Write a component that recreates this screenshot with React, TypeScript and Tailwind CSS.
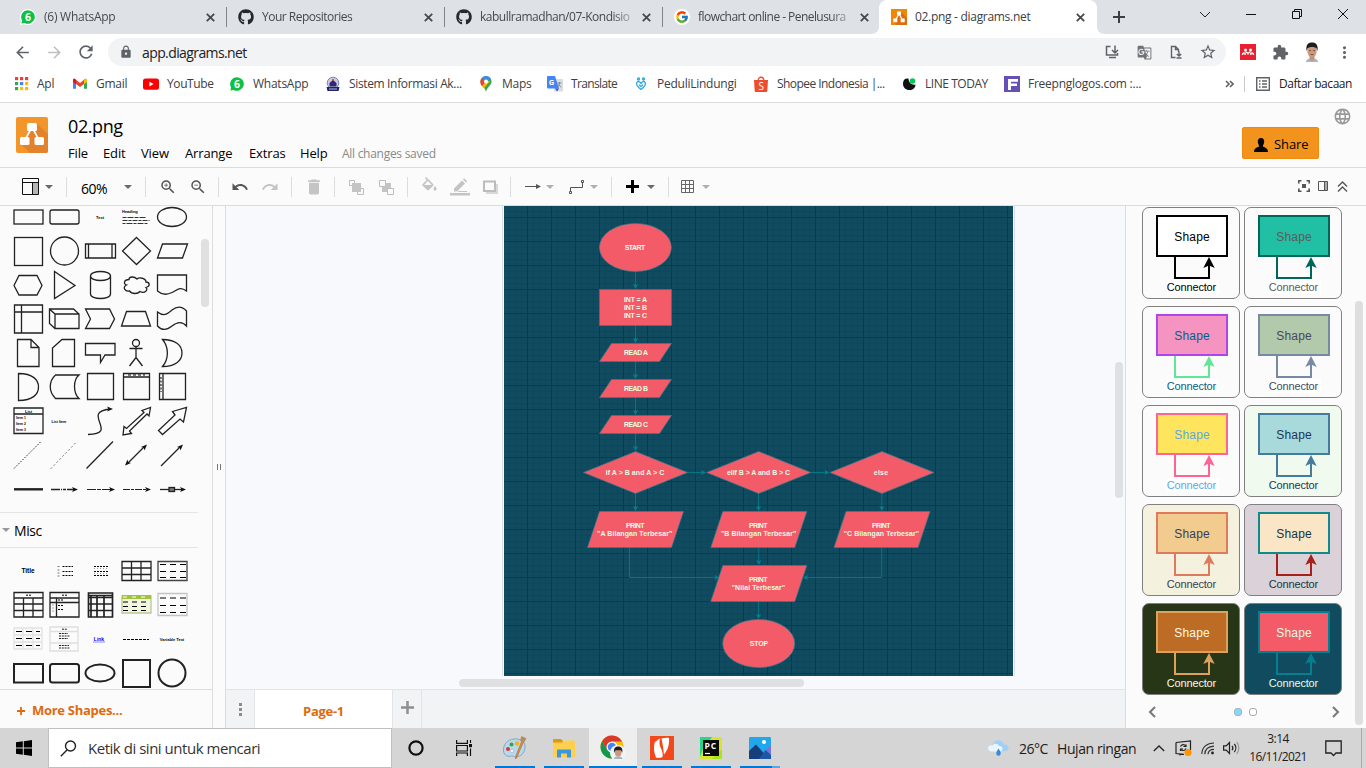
import React from "react";
import { FaGithub } from "react-icons/fa";
import { FcGoogle } from "react-icons/fc";
import {
  MdArrowBack, MdArrowForward, MdRefresh, MdLock, MdStarBorder, MdExtension, MdMoreVert,
  MdZoomIn, MdZoomOut, MdUndo, MdRedo, MdDelete, MdFormatColorFill, MdLanguage, MdGTranslate,
} from "react-icons/md";

type Kids = { children?: React.ReactNode };

/* ---------- small drawings ---------- */

const X = ({ s = 9, c = "#45484c", w = 1.8 }: { s?: number; c?: string; w?: number }) => (
  <svg width={s} height={s} viewBox="0 0 9 9" className="shrink-0" stroke={c} strokeWidth={w}><path d="M.8.8l7.4 7.4M8.2.8L.8 8.2" /></svg>
);

const WaBadge = ({ ring = false }: { ring?: boolean }) => (
  <svg width="16" height="16" viewBox="0 0 16 16">
    {ring && <path d="M8 0a8 8 0 1 1-4 14.9L.2 16 1 12A8 8 0 0 1 8 0z" fill="#fff" />}
    <path d="M8 1.2a6.8 6.8 0 1 1-3.400 12.700L1.400 14.600l.7-3.200A6.800 6.800 0 0 1 8 1.200z" fill="#0cc143" />
    <text x="8" y="12" textAnchor="middle" fontSize="10.500" fontWeight="700" fill="#fff" fontFamily="Open Sans, sans-serif">6</text>
  </svg>
);

const Drawio = ({ size }: { size: number }) => (
  <svg width={size} height={size} viewBox="0 0 16 16">
    <rect width="16" height="16" fill="#f08705" />
    <path d="M10 3l6 6v7H6l-3.500-3.500z" fill="#df6c0c" />
    <path d="M8 5L4.500 11M8 5l3.500 6" stroke="#fff" strokeWidth="1.200" />
    <path d="M6 2.500h4v3.800H6zM2.300 9.500h4v3.800h-4zM9.700 9.500h4v3.800h-4z" fill="#fff" />
  </svg>
);

const Logo = () => (
  <svg width="32" height="36" viewBox="0 0 32 36">
    <rect width="32" height="36" rx="2" fill="#f2962c" />
    <path d="M20 6l12 11v17a2 2 0 0 1-2 2H14L5 27l9-13z" fill="#e2822d" />
    <path d="M15 12L9.500 22M17 12L22.500 22" stroke="#fff" strokeWidth="1.600" />
    <rect x="11" y="6" width="10" height="8" rx="1.500" fill="#fff" />
    <rect x="4" y="20" width="9.500" height="8" rx="1.500" fill="#fff" />
    <rect x="18.500" y="20" width="9.500" height="8" rx="1.500" fill="#fff" />
  </svg>
);

const Apps = () => {
  const c = ["#ea4335", "#ea4335", "#ea4335", "#34a853", "#4285f4", "#fbbc05", "#34a853", "#fbbc05", "#fbbc05"];
  return (
    <svg width="16" height="16" viewBox="0 0 16 16">
      {c.map((f, i) => <rect key={i} x={2 + (i % 3) * 5} y={1 + Math.floor(i / 3) * 5} width="3.200" height="3.200" fill={f} />)}
    </svg>
  );
};
const Gmail = () => (
  <svg width="16" height="16" viewBox="0 0 16 16">
    <path d="M1 3.500v9.200h3V6z" fill="#4285f4" /><path d="M12 6v6.700h3V3.500z" fill="#34a853" />
    <path d="M1 3.500L2.500 2.500 8 7l5.500-4.500L12 8l-4 3-4-3v-1z" fill="#ea4335" />
    <path d="M12 4l2-1.500 1 1V6l-3 2.200z" fill="#fbbc04" /><path d="M4 4L2 2.500 1 3.500V6l3 2.200z" fill="#c5221f" />
  </svg>
);
const Youtube = () => (
  <svg width="16" height="16" viewBox="0 0 16 16"><rect y="2.500" width="16" height="11.200" rx="2.500" fill="#f00" /><path d="M6.400 5.700v4.800l4.200-2.400z" fill="#fff" /></svg>
);
const Campus = () => (
  <svg width="16" height="16" viewBox="0 0 16 16">
    <circle cx="8" cy="7" r="5.800" fill="#c9cbe0" stroke="#7f83b5" /><path d="M4.500 7l3.500-3 3.500 3v3.500h-7z" fill="#2a2a78" />
    <path d="M1.500 11h13l-1 4h-11z" fill="#22226c" /><path d="M4 13h8" stroke="#b9bbd8" /><circle cx="8" cy="4" r="1" fill="#d33" />
  </svg>
);
const MapPin = () => (
  <svg width="16" height="16" viewBox="0 0 16 16">
    <path d="M8 0a5.600 5.600 0 0 1 5.600 5.600C13.600 9.500 9 11 8 16 7 11 2.400 9.500 2.400 5.600A5.600 5.600 0 0 1 8 0z" fill="#34a853" />
    <path d="M8 0a5.600 5.600 0 0 1 4.900 2.900L8 5.600 4 1.700A5.600 5.600 0 0 1 8 0z" fill="#4285f4" />
    <path d="M3.800 1.900L8 5.600 4 10.300C2 8 1.700 4.500 3.800 1.900z" fill="#ea4335" />
    <path d="M8 5.600L4 10.300l1.800 1.900 6.300-7.300z" fill="#fbbc04" /><circle cx="8" cy="5.600" r="2" fill="#fff" />
  </svg>
);
const Translate = () => (
  <svg width="16" height="16" viewBox="0 0 16 16">
    <rect x="7" y="3" width="9" height="12.500" rx="1" fill="#dadce0" /><path d="M0 1a1 1 0 0 1 1-1h7l4 12.500H1a1 1 0 0 1-1-1z" fill="#4285f4" />
    <path d="M8 12.500h4L10 15.500z" fill="#3b50c4" />
    <text x="1.800" y="9.200" fontSize="7.500" fontWeight="700" fill="#fff" fontFamily="Open Sans, sans-serif">G</text>
    <path d="M10.500 7h4M12.500 6v1c0 2-1 3.500-2 4.200M11.500 8.500c.5 1 1.500 2 2.800 2.600" stroke="#5f7f95" strokeWidth=".8" fill="none" />
  </svg>
);
const Peduli = () => (
  <svg width="16" height="16" viewBox="0 0 16 16" fill="none" stroke="#2fa8e0" strokeWidth="1.300">
    <circle cx="5.500" cy="3" r="1" /><circle cx="10.500" cy="3" r="1" />
    <path d="M4 6.200c-1.300 2 .2 4.500 4 7.300 3.800-2.800 5.300-5.300 4-7.300-1-1.200-3-.8-4 1.300-1-2.100-3-2.500-4-1.300zM6 8.700l2 2 2-2" />
  </svg>
);
const Shopee = () => (
  <svg width="16" height="16" viewBox="0 0 16 16">
    <path d="M5 5c0-5 6-5 6 0" fill="none" stroke="#ee4d2d" strokeWidth="1.300" /><path d="M1 4h14l-.7 11a1 1 0 0 1-1 1H2.700a1 1 0 0 1-1-1z" fill="#ee4d2d" />
    <text x="8" y="13.600" textAnchor="middle" fontSize="10" fill="#fff" fontFamily="Open Sans, sans-serif">S</text>
  </svg>
);
const LineToday = () => (
  <svg width="16" height="16" viewBox="0 0 16 16"><path d="M7.500 2.500C4 2 2 4 2 7.500 2 11.500 4.500 14 8.500 14c3.500 0 6-2 6-5.500-3 1-7-1.500-7-6z" fill="#111" /><circle cx="11.500" cy="5" r="2.800" fill="#06c755" /></svg>
);
const FreePng = () => (
  <svg width="16" height="16" viewBox="0 0 16 16"><rect width="16" height="16" fill="#6650b4" /><path d="M4 3h10v2.800H7v1.700h6V10H7v4H4z" fill="#fff" /></svg>
);

const Face = ({ s }: { s: number }) => (
  <svg width={s} height={s} viewBox="0 0 20 20">
    <path d="M4 20c.5-3 2.500-3.500 6-3.500s5.500.5 6 3.500z" fill="#a9b4bd" /><path d="M7.500 13h5v4L10 19l-2.500-2z" fill="#c58f72" />
    <ellipse cx="10" cy="9" rx="4.700" ry="6.500" fill="#c99a80" />
    <path d="M4.600 9C3.500 3 6 .5 10 .5S16.500 3 15.400 9L14.300 6C12 4.500 8 4.500 5.700 6z" fill="#221d1c" />
    <path d="M7 8.500h2M11 8.500h2M8.500 12.500h3" stroke="#6d4234" strokeWidth=".8" />
  </svg>
);

const Caret = ({ c = "#6a6a6a" }: { c?: string }) => (
  <svg width="8" height="4" viewBox="0 0 8 4" className="shrink-0"><path d="M0 0h8L4 4z" fill={c} /></svg>
);

/* ---------- browser chrome ---------- */

const tabs = [
  { icon: <WaBadge ring />, label: "(6) WhatsApp", track: "tracking-[-0.25px]" },
  { icon: <FaGithub size={16} color="#24292f" />, label: "Your Repositories", track: "tracking-[-0.5px]" },
  { icon: <FaGithub size={16} color="#24292f" />, label: "kabullramadhan/07-Kondisio", track: "tracking-[-0.48px]" },
  { icon: <span className="rounded-full bg-white p-px"><FcGoogle size={14} /></span>, label: "flowchart online - Penelusura", track: "tracking-[-0.55px]" },
];

function TabStrip() {
  return (
    <div className="flex h-[34px] bg-[#dee1e6] pl-[9px] text-[12px] text-[#45494d]">
      {tabs.map((t, i) => (
        <div key={i} className={`flex w-[218px] shrink-0 items-center pl-[11px] ${i < 3 ? "" : "pr-px"}`}>
          <span className="flex w-4 shrink-0 justify-center">{t.icon}</span>
          <span className={`ml-2 w-[162px] shrink-0 whitespace-nowrap [mask-image:linear-gradient(to_right,#000_132px,transparent_160px)] ${t.track}`}>{t.label}</span>
          <X />
          {i < 3 && <span className="ml-auto h-5 w-px bg-[#808489]" />}
        </div>
      ))}
      <div className="-ml-[10px] flex w-[234px] shrink-0 text-[#3c4043]">
        <svg width="8" height="34" className="shrink-0"><path d="M8 34H0c5 0 8-3 8-8z" fill="#fff" /></svg>
        <div className="flex grow items-center rounded-t-lg bg-white pl-[12px]">
          <Drawio size={16} />
          <span className="ml-2 w-[161px] tracking-[-0.3px]">02.png - diagrams.net</span>
          <X />
        </div>
        <svg width="8" height="34" className="shrink-0"><path d="M0 34h8c-5 0-8-3-8-8z" fill="#fff" /></svg>
      </div>
      <div className="flex w-[28px] items-center justify-center"><svg width="12" height="12" stroke="#3c4043" strokeWidth="2"><path d="M6 0v12M0 6h12" /></svg></div>
      <div className="ml-auto flex h-[28px] items-center gap-[30px] pr-[15px]">
        <svg width="16" height="16" fill="none" stroke="#222"><path d="M3 6l5 5 5-5" /></svg>
        <svg width="16" height="16" stroke="#111"><path d="M3 8.500h10" /></svg>
        <svg width="16" height="16" fill="none" stroke="#111"><path d="M3.500 5.500h7v7h-7zM5.500 5V3.500h7v7H11" /></svg>
        <svg width="16" height="16" stroke="#111"><path d="M3 3l10 10M13 3L3 13" /></svg>
      </div>
    </div>
  );
}

const C32 = ({ children }: Kids) => <span className="flex w-8 justify-center">{children}</span>;

function AddressBar() {
  return (
    <div className="flex h-[36px] items-center bg-white pl-[6px]">
      <C32><MdArrowBack size={19} color="#5f6368" /></C32>
      <C32><MdArrowForward size={19} color="#bdbfc2" /></C32>
      <C32><MdRefresh size={20} color="#5f6368" /></C32>
      <div className="ml-[6px] flex h-7 w-[1118px] items-center rounded-full bg-[#f1f3f4] pr-[2px]">
        <span className="ml-[11px]"><MdLock size={14} color="#5f6368" /></span>
        <span className="ml-[9px] text-[14px] tracking-[-0.6px] text-[#202124]">app.diagrams.net</span>
        <div className="ml-auto flex items-center">
          <C32><svg width="16" height="16" fill="none" stroke="#5f6368" strokeWidth="1.500"><path d="M6.500 2.500H2.500v8.500h11V9M11 1.500v7M8 6l3 3 3-3M5 13.500h7" /></svg></C32>
          <C32><MdGTranslate size={15} color="#6f7377" /></C32>
          <C32><svg width="16" height="16" fill="none" stroke="#5f6368" strokeWidth="1.400"><path d="M7.500 13.500H3.500v-11h4l3 3V8M7.500 2.500v3h3M11 7.500v4M8.800 10l2.200 2 2.200-2M8.500 14h5" /></svg></C32>
          <C32><MdStarBorder size={18} color="#5f6368" /></C32>
        </div>
      </div>
      <div className="ml-[6px] flex items-center">
        <C32>
          <svg width="16" height="16" viewBox="0 0 16 16"><rect width="16" height="16" fill="#e8202f" /><path d="M2.500 11C2.500 8.500 5 8 5.300 10.800M5.500 8C6.500 8 7 9 8 9s1.500-1 2.500-1M13.500 11c0-2.500-2.500-3-2.800-.2M8 8.500v2" fill="none" stroke="#fff" strokeWidth="1.500" /><circle cx="5.500" cy="6" r="1.500" fill="#fff" /><circle cx="10.500" cy="6" r="1.500" fill="#fff" /></svg>
        </C32>
        <C32><MdExtension size={17} color="#5f6368" /></C32>
        <C32><Face s={20} /></C32>
        <C32><MdMoreVert size={19} color="#5f6368" /></C32>
      </div>
    </div>
  );
}

const marks = [
  { w: "w-[59px]", icon: <Apps />, t: "Apl", k: "" },
  { w: "w-[71px]", icon: <Gmail />, t: "Gmail", k: "" },
  { w: "w-[86px]", icon: <Youtube />, t: "YouTube", k: "tracking-[-0.4px]" },
  { w: "w-[96px]", icon: <WaBadge />, t: "WhatsApp", k: "" },
  { w: "w-[153px]", icon: <Campus />, t: "Sistem Informasi Ak...", k: "tracking-[-0.35px]" },
  { w: "w-[69px]", icon: <MapPin />, t: "Maps", k: "" },
  { w: "w-[86px]", icon: <Translate />, t: "Translate", k: "tracking-[-0.65px]" },
  { w: "w-[120px]", icon: <Peduli />, t: "PeduliLindungi", k: "" },
  { w: "w-[148px]", icon: <Shopee />, t: "Shopee Indonesia |...", k: "tracking-[-0.55px]" },
  { w: "w-[103px]", icon: <LineToday />, t: "LINE TODAY", k: "tracking-[-0.45px]" },
  { w: "w-[150px]", icon: <FreePng />, t: "Freepnglogos.com :...", k: "" },
];

function Bookmarks() {
  return (
    <div className="flex h-[33px] items-center border-b border-[#dadce0] bg-white pb-[4px] pl-[13px] text-[12px] tracking-[-0.25px] text-[#3c4043]">
      {marks.map((m) => (
        <div key={m.t} className={`flex shrink-0 items-center gap-2 whitespace-nowrap ${m.w}`}>{m.icon}<span className={m.k}>{m.t}</span></div>
      ))}
      <svg width="9" height="8" className="ml-[71px] shrink-0" fill="none" stroke="#5f6368" strokeWidth="1.600"><path d="M1 1l3 3-3 3M5 1l3 3-3 3" /></svg>
      <span className="ml-[10px] h-4 w-px bg-[#c6c9cd]" />
      <svg width="14" height="14" className="ml-[11px] shrink-0" fill="none" stroke="#5f6368" strokeWidth="1.400"><path d="M.7.7h12.600v12.600H.7zM3 4h1.500M6 4h5M3 7h1.500M6 7h5M3 10h1.500M6 10h5" /></svg>
      <span className="ml-[9px] whitespace-nowrap tracking-[-0.45px] text-[#202124]">Daftar bacaan</span>
    </div>
  );
}

/* ---------- application header and toolbar ---------- */

const menus = [
  { t: "File", w: "w-[35px]" }, { t: "Edit", w: "w-[38px]" }, { t: "View", w: "w-[44px]" },
  { t: "Arrange", w: "w-[64px]" }, { t: "Extras", w: "w-[51px]" }, { t: "Help", w: "w-[42px]" },
];

function Header() {
  return (
    <div className="flex h-[65px] border-b border-[#dadce0] bg-[#fbfbfb]">
      <div className="ml-4 mt-[14px]"><Logo /></div>
      <div className="ml-5 flex flex-col">
        <div className="mt-[11px] h-6 text-[18px] leading-6 tracking-[-0.4px]">02.png</div>
        <div className="mt-[6px] flex h-5 items-center text-[13px] tracking-[-0.15px]">
          {menus.map((m) => <span key={m.t} className={m.w}>{m.t}</span>)}
          <span className="whitespace-nowrap text-[12px] tracking-[-0.28px] text-[#8a8a8a]">All changes saved</span>
        </div>
      </div>
      <div className="ml-auto mt-6 flex h-8 w-[77px] items-center rounded-[2px] border border-[#ef8a0b] bg-[#f2931e] pl-[11px] pt-[3px] text-[13px] text-black">
        <svg width="14" height="14" viewBox="0 0 14 14"><path d="M7 0c2.300 0 3.500 1.700 3.200 4C10 6 9 7 8.800 8.300c.5.900 5.200 1.200 5.200 5.700H0c0-4.500 4.700-4.800 5.200-5.700C5 7 4 6 3.800 4 3.500 1.700 4.700 0 7 0z" /></svg>
        <span className="ml-[6px] tracking-[-0.1px]">Share</span>
      </div>
      <div className="ml-[15px] mr-[15px] mt-[5px]"><MdLanguage size={19} className="-m-px" color="#989898" /></div>
    </div>
  );
}

const Sep = ({ m }: { m: string }) => <span className={`h-5 w-px shrink-0 bg-[#dadce0] ${m}`} />;

function Toolbar() {
  return (
    <div className="flex h-[38px] items-center border-b border-[#dadce0] bg-[#fbfbfb] [&>svg]:shrink-0">
      <svg width="17" height="17" className="ml-[22px]"><rect x="11" y="5" width="5" height="11" fill="#b5b5b5" /><path d="M.5.5h16v16H.5zM.5 4.500h16M10.500 4.500v12" fill="none" stroke="#111" /></svg>
      <span className="ml-[6px] flex"><Caret /></span>
      <Sep m="ml-[13px]" />
      <span className="ml-[14px] mt-1 w-[28px] text-[14px] tracking-[-0.5px]">60%</span>
      <span className="ml-[15px] flex"><Caret /></span>
      <Sep m="ml-[13px]" />
      <MdZoomIn size={18} color="#555" className="ml-[13px]" />
      <MdZoomOut size={18} color="#555" className="ml-[12px]" />
      <Sep m="ml-[11px]" />
      <MdUndo size={18} color="#555" className="ml-[12px]" />
      <MdRedo size={18} color="#c4c4c4" className="ml-[12px]" />
      <Sep m="ml-[12px]" />
      <MdDelete size={20} color="#c4c4c4" className="-mr-px ml-[12px]" />
      <Sep m="ml-[11px]" />
      <svg width="18" height="18" className="ml-[12px]"><path d="M2.500 2.500h5v5h-5zM10.500 10.500h6v6h-6z" fill="#fbfbfb" stroke="#bdbdbd" /><rect x="5" y="5" width="9" height="9" fill="#c4c4c4" /></svg>
      <svg width="18" height="18" className="ml-[12px]"><path d="M5 5h9v9H5z" fill="#c4c4c4" /><path d="M2.500 2.500h6v6h-6zM10.500 10.500h6v6h-6z" fill="#fbfbfb" stroke="#bdbdbd" /></svg>
      <Sep m="ml-[12px]" />
      <MdFormatColorFill size={19} color="#c4c4c4" className="ml-[12px] mr-[-1px] [clip-path:inset(0_0_22%_0)]" />
      <svg width="20" height="20" className="ml-[12px]"><path d="M4 11.500L12 3.500l3 3-8 8H4zM13 2.500l1.200-1.200 3 3L16 5.500z" fill="#c4c4c4" /><path d="M8 14.500h9" stroke="#c4c4c4" /><path d="M0 16h20v2.500H0z" fill="#c4c4c4" /></svg>
      <svg width="18" height="18" className="ml-[11px]"><path d="M5 6h12v10H5z" fill="#d8d8d8" /><rect x="3" y="3.500" width="11" height="9.500" fill="#fbfbfb" stroke="#bcbcbc" strokeWidth="2" /></svg>
      <Sep m="ml-[11px]" />
      <svg width="16" height="8" className="ml-[14px]"><path d="M0 3.500h13" stroke="#555" /><path d="M11 1L16 3.500l-5 2.500z" fill="#555" /></svg>
      <span className="ml-[5px] flex"><Caret c="#b0b0b0" /></span>
      <svg width="16" height="16" className="ml-[15px]" fill="none" stroke="#555"><path d="M1.500 12V8.500h12V4M.5 12.500h2v2h-2zM12.500 1.500h2v2h-2z" /></svg>
      <span className="ml-[5px] flex"><Caret c="#b0b0b0" /></span>
      <Sep m="ml-[13px]" />
      <svg width="13" height="13" className="ml-[14px]"><path d="M6.500 0v13M0 6.500h13" stroke="#000" strokeWidth="3" /></svg>
      <span className="ml-[8px] flex"><Caret /></span>
      <Sep m="ml-[13px]" />
      <svg width="13" height="13" className="ml-[12px]" fill="none" stroke="#666"><path d="M.5.5h12v12H.5zM4.500 0v13M8.500 0v13M0 4.500h13M0 8.500h13" /></svg>
      <span className="ml-[8px] flex"><Caret c="#b0b0b0" /></span>
      <div className="ml-auto flex items-center gap-[8px] pr-[18px] [&>svg]:-mt-px">
        <svg width="12" height="12" fill="none" stroke="#555" strokeWidth="1.600"><path d="M.8 3.500V.8h2.700M8.500.8h2.700v2.700M11.200 8.500v2.700H8.500M3.500 11.200H.8V8.500" /><rect x="4" y="4" width="4" height="4" fill="#555" stroke="none" /></svg>
        <svg width="10" height="10"><rect x="6" y="1" width="3" height="8" fill="#aaa" /><path d="M.5.5h9v9h-9zM6.500 0v10" fill="none" stroke="#555" /></svg>
        <svg width="11" height="11" fill="none" stroke="#555" strokeWidth="1.400" className="ml-[1px]"><path d="M1 5.500L5.500 1 10 5.500M1 10.500L5.500 6 10 10.500" /></svg>
      </div>
    </div>
  );
}

/* ---------- shape palette ---------- */

const Tiny = ({ x = 0, y = 0, s = 4, b = true, c = "#000", a = "middle", children }: Kids & { x?: number; y?: number; s?: number; b?: boolean; c?: string; a?: "start" | "middle" }) => (
  <text x={x} y={y} fontSize={s} textAnchor={a} fontWeight={b ? 700 : 400} fill={c} stroke="none" fontFamily="Liberation Sans, sans-serif">{children}</text>
);
const Head = ({ x, y, r }: { x: number; y: number; r: number }) => (
  <path d="M0 0L-6 -2.500L-4.500 0L-6 2.500Z" fill="#111" stroke="none" transform={`translate(${x} ${y}) rotate(${r})`} />
);
const rule = (d: string, c = "#111", dash = "") => <path d={d} stroke={c} strokeWidth="1" strokeDasharray={dash} />;

const general: React.ReactNode[] = [
  <rect x="-14" y="-7" width="29" height="14" />,
  <rect x="-14" y="-7" width="29" height="14" rx="2" />,
  <Tiny y={1.500}>Text</Tiny>,
  <><Tiny x={-14} y={-4} a="start">Heading</Tiny>{rule("M-13.500 .5h24", "#333", "4 1 6 1")}{rule("M-13.500 3.500h27", "#333", "5 1 3 1")}{rule("M-13.500 6.500h25", "#333", "3 1 6 1")}</>,
  <ellipse rx="14.500" ry="9.500" />,
  <rect x="-13.500" y="-13.500" width="28" height="28" />,
  <circle cx=".5" r="14" />,
  <path d="M-14.500-7h30v14h-30zM-11.500-7v14M12-7v14" />,
  <path d="M.5-13.500l14 13.500-14 13.500L-13.500 0z" />,
  <path d="M-9.500-7h25L10.500 7h-25z" />,
  <path d="M-14 .5l5-10h18l5 10-5 9.500H-9z" />,
  <path d="M-9.500-13.500v27L11 .5z" />,
  <path d="M-9.500-9v18c0 6 20 6 20 0V-9c0-6-20-6-20 0c0 6 20 6 20 0" />,
  <path d="M-7-5.500C-12-5.500-13-1-9.500 0-14 2-11 7-6.500 6-4 9.500 2 9 4 6.500 9 9 12.500 4.500 10 2.500 15 1 13.500-3 10-3 10-7 3-8 1-6-2-9-7-8.500-7-5.500z" />,
  <path d="M-14.500-10h29V6C8 1 5 5 0 7.500S-10 10-14.500 6z" />,
  <path d="M-13.500-14h28v28h-28zM-13.500-7h28M-6.500-14v28" />,
  <path d="M-14.500-10h24l5.500 5v14.500h-24l-5.500-5zM-14.500-10l5.500 5h24M-9-5v14.500" />,
  <path d="M-14.500-10h24l5 10-5 9.500h-24l5-9.500z" />,
  <path d="M-9.500-7.500h19L14.500 7h-29z" />,
  <path d="M-14.500-7C-8-2-5-5 0-9S10-13 14.500-8V7C10 2 5 3 0 7S-10 12-14.500 7z" />,
  <path d="M-10.500-13.500H3l8 8v19h-21.500zM3-13.500v8h8" />,
  <path d="M-2-13.500h12.500v27h-22V-5z" />,
  <path d="M-14.500-9.500h29.500V2H5L.5 9.500V2h-15z" />,
  <><circle cy="-10" r="3.500" /><path d="M0-6.500V5M-6.500-4.500h13M0 4.500L-6.500 13M0 4.500L6.500 13" /></>,
  <path d="M-9.500-13.500C3-13.500 10-8 10 0S3 13.500-9.500 13.500C-3 6-3-6-9.500-13.500z" />,
  <path d="M-9.500-13.500C5-13.500 10.500-7 10.500 0S5 13.500-9.500 13.500z" />,
  <path d="M-8.500-12h23.500c-6 5-6 18 0 23.500h-23.500c-7-7-7-17 0-23.500z" />,
  <path d="M-12.500-13.500h26v26h-26z" />,
  <><path d="M-12.500-13.500h26v26h-26zM-12.500-10h26" />{rule("M-8-12h17", "#000", "3 2")}</>,
  <><path d="M-12.500-13.500h26v26h-26zM-9-13.500v26" />{rule("M-11-10v15", "#000", "2 1.500")}</>,
  <><path d="M-14-13h29v25.500h-29zM-14-7h29" /><Tiny x={.5} y={-8.500}>List</Tiny><Tiny x={-12} y={-2.500} s={3.400} a="start">Item 1</Tiny><Tiny x={-12} y={3.500} s={3.400} a="start">Item 2</Tiny><Tiny x={-12} y={9.500} s={3.400} a="start">Item 3</Tiny></>,
  <Tiny x={-12.500} y={1.500} s={3.600} a="start">List Item</Tiny>,
  <><path d="M-12 13.500C20 13-20-9 10-12" /><Head x={13} y={-12} r={0} /></>,
  <path d="M-13 14l1-8.500 2.500 2L8-8.500l-2-2 8.500-3-1.500 8.500-2-2L-6.500 10l2 2.500z" />,
  <path d="M-13.500 9.500L3-6 .5-9.500 14.500-13.500 11.500 1 8-2-9.500 13.500z" />,
  <path d="M-14 13.500L13-13.500" strokeWidth="1" strokeDasharray="1.500 1.500" />,
  <path d="M-13 13.500L13-13.500" strokeWidth="1" strokeDasharray="1.200 3" />,
  <path d="M-13.500 13.500L13-13.500" />,
  <><path d="M-9 9L8-8" /><Head x={-11} y={10.500} r={135} /><Head x={11} y={-10.500} r={-45} /></>,
  <><path d="M-11 11L8-8" /><Head x={11} y={-10.500} r={-45} /></>,
  <path d="M-14 .3h29" strokeWidth="2.400" />,
  <><path d="M-13 .5h24" strokeDasharray="9 1 1 1 3 1" /><Head x={14} y={.5} r={0} /></>,
  <><path d="M-13 .5h25" strokeWidth="1" strokeDasharray="9 1 4 1" /><Head x={15} y={.5} r={0} /></>,
  <><path d="M-13 .5h25" strokeWidth="1" strokeDasharray="7 1 3 1" /><Head x={15} y={.5} r={0} /></>,
  <><path d="M-12 .5h24" /><rect x="-3" y="-1.500" width="5.500" height="4" fill="#777" /><Head x={14} y={.5} r={0} /></>,
];

const dashRows = (c = "#000") => rule("M-12-6.500h26M-12 .5h26M-12 6.500h26", c, "6 4");
const misc: React.ReactNode[] = [
  <Tiny s={6.500} y={2.200}>Title</Tiny>,
  <>{rule("M-6.500-4.500h2M-6.500-1h2M-6.500 2h2M-6.500 5h2", "#777")}{rule("M-1.500-4.500H9M-1.500 .5H9M-1.500 4.500H9", "#000", "2 1")}</>,
  <>{rule("M-6-4.500h15M-6 .5h15M-6 4.500h15", "#000", "2 1")}{rule("M-6-2.500h14M-6 2.500h14", "#999", "1 2")}</>,
  <path d="M-14-9.500h29v19h-29zM-14-3h29M-14 3.500h29M-4.500-9.500v19M5-9.500v19" />,
  <><path d="M-14-9.500h29v19h-29z" stroke="#444" />{dashRows()}</>,
  <><path d="M-14-12.500h29v24.500h-29zM-14-7h29M-14-1h29M-14 5.500h29M-4.500-7v19M5-7v19" />{rule("M-2-9.800h6", "#000", "2 1")}</>,
  <><path d="M-14-12.500h29v24.500h-29zM-14-7h29M-14-2.500h29M-7.500-7v19" />{rule("M-2-9.800h6M-6-5h6M-6 .5h6M-6 4.500h6", "#000", "2 1")}{rule("M-11-.5v9", "#555", "1 2")}</>,
  <path d="M-11.500-12h24v24h-24zM-11.500-9.500h24M-11.500-7.500h24M-11.500-1h24M-11.500 5.500h24M-9-9v21M-3-9v21M4-9v21" strokeWidth="1.700" />,
  <><path d="M-14-9h29v17h-29z" fill="#f3f6df" stroke="#b9c79a" /><path d="M-14-8h29" stroke="#a2c13c" strokeWidth="4" />{rule("M-13-8h26", "#fff", "4 5")}{rule("M-13-3h26M-13 1.500h26M-13 5.500h26", "#000", "5 4")}</>,
  <><path d="M-14-11.500h29v22h-29z" stroke="#c4c4c4" />{rule("M-12-7h26M-12 .5h26M-12 7.500h26", "#000", "6 4")}</>,
  <><path d="M-14-11h28v21h-28zM-14-4h28M-14 3h28M-5-11v21M5-11v21" stroke="#e2e2e2" />{rule("M-12-7.500h24M-12-.5h24M-12 6.500h24", "#000", "6 4")}</>,
  <><path d="M-14-12h28v24h-28zM-14-7.500h28M-14 4h28" stroke="#dedede" />{rule("M-2-9.800h5M-5-5.500H4M-5-3H6M-5-.5H4M-5 6.500H5M-5 9H6", "#222", "2 .8")}</>,
  <><Tiny s={5} x={-1} y={1.500} c="#0000ee">Link</Tiny>{rule("M-7 3H5", "#8a8aff")}</>,
  rule("M-13 .5h26", "#000", "3 1"),
  <Tiny s={4} y={1.500}>Variable Text</Tiny>,
  <rect x="-14" y="-9" width="29" height="18.500" strokeWidth="2" />,
  <rect x="-14" y="-9" width="29" height="18.500" rx="2.500" strokeWidth="2" />,
  <ellipse rx="14.500" ry="8.500" strokeWidth="2" />,
  <rect x="-13" y="-13" width="27" height="27" strokeWidth="2" />,
  <circle r="13.500" strokeWidth="2" />,
];

const Palette = ({ items }: { items: React.ReactNode[] }) => (
  <div className="grid w-[180px] grid-cols-5">
    {items.map((it, i) => (
      <svg key={i} width="36" height="34" viewBox="-18 -17 36 34" fill="none" stroke="#222" strokeWidth="1.300">{it}</svg>
    ))}
  </div>
);

function Sidebar() {
  return (
    <div className="flex w-[213px] shrink-0 flex-col border-r border-[#dadce0] bg-[#fbfbfb]">
      <div className="flex h-[484px] overflow-hidden border-b border-[#dadce0]">
        <div className="-mt-[6px] w-[198px] shrink-0">
          <div className="h-[312px] pl-[10px]"><Palette items={general} /></div>
          <div className="flex h-[36px] items-center border-y border-[#e5e5e5] pl-[2px] text-[14px]"><Caret c="#999" /><span className="ml-1 tracking-[-0.4px]">Misc</span></div>
          <div className="pl-[10px] pt-[6px]"><Palette items={misc} /></div>
        </div>
        <div className="ml-[3px] mt-[33px] h-[68px] w-2 rounded-full bg-[#e0e0e0]" />
      </div>
      <div className="flex h-[38px] items-center pl-[17px] pt-[3px] text-[13px] font-bold tracking-[-0.28px] text-[#dd6b0e]">
        <svg width="8" height="8" stroke="#dd6b0e" strokeWidth="1.800"><path d="M4 0v8M0 4h8" /></svg>
        <span className="ml-[7px]">More Shapes...</span>
      </div>
    </div>
  );
}

/* ---------- flowchart ---------- */

const FILL = "#f45b69", EDGE = "#028090";
const Lbl = ({ x, y, w, children }: Kids & { x: number; y: number; w: number }) => (
  <text x={x} y={y} textLength={w} fontSize="7" fontWeight="700" fill="#e4fde1" fontFamily="Liberation Sans, sans-serif">{children}</text>
);
const Arrow = ({ x, y, r = 0 }: { x: number; y: number; r?: number }) => (
  <path d="M0 0L-2.600-5L0-4L2.600-5Z" fill={EDGE} transform={`translate(${x} ${y}) rotate(${r})`} />
);
const Down = ({ x, a, b }: { x: number; a: number; b: number }) => <><path d={`M${x} ${a}V${b - 4}`} stroke={EDGE} strokeWidth=".8" /><Arrow x={x} y={b} /></>;
const Para = ({ x, y, w, h }: { x: number; y: number; w: number; h: number }) => <path d={`M${x + 12} ${y}H${x + w}L${x + w - 12} ${y + h}H${x}Z`} />;
const Diamond = ({ x }: { x: number }) => <path d={`M${x} 451.500l52 21-52 21-52-21z`} />;

function Flowchart() {
  return (
    <svg width="509" height="470" viewBox="504 206 509 470" className="block">
      <defs>
        <pattern id="minor" x="503" y="199" width="6" height="6" patternUnits="userSpaceOnUse"><path d="M0 .5h6M.5 0v6" stroke="#0e4359" strokeWidth="1" /></pattern>
        <pattern id="major" x="503" y="193" width="24" height="24" patternUnits="userSpaceOnUse"><path d="M0 .5h24M.5 0v24" stroke="#0a3a50" strokeWidth="1" /></pattern>
      </defs>
      <rect x="504" y="206" width="509" height="470" fill="#114b5f" />
      <rect x="504" y="206" width="509" height="470" fill="url(#minor)" opacity=".65" />
      <rect x="504" y="206" width="509" height="470" fill="url(#major)" />
      <g fill="none">
        <Down x={635.500} a={271} b={289} /><Down x={635.500} a={325} b={343} /><Down x={635.500} a={361} b={379} />
        <Down x={635.500} a={397} b={415} /><Down x={635.500} a={433} b={451} />
        {[635.500, 758.500, 881.800].map((x) => <Down key={x} x={x} a={493} b={511} />)}
        <Down x={758.800} a={547} b={565} /><Down x={758.500} a={601} b={619} />
        <path d="M687 472.500H702M811 472.500H826M629.500 547V577.500H716M881.700 547V577.500H807" stroke={EDGE} strokeWidth=".8" />
        <Arrow x={706} y={472.500} r={-90} /><Arrow x={829.500} y={472.500} r={-90} /><Arrow x={719.500} y={577.500} r={-90} /><Arrow x={803} y={577.500} r={90} />
      </g>
      <g fill={FILL} stroke="#3b7d8c" strokeWidth=".7">
        <ellipse cx="635.400" cy="247.500" rx="36" ry="24" />
        <rect x="599.500" y="289.500" width="72" height="36" />
        {[343.500, 379.500, 415.500].map((y) => <Para key={y} x={599.500} y={y} w={72} h={18} />)}
        <Diamond x={635.500} /><Diamond x={758.700} /><Diamond x={882} />
        {[587.500, 710.800, 834].map((x) => <Para key={x} x={x} y={511.500} w={96} h={36} />)}
        <Para x={710.800} y={565.500} w={96} h={36} />
        <ellipse cx="758.700" cy="643.500" rx="36" ry="24" />
      </g>
      <Lbl x={624.700} y={250} w={20.500}>START</Lbl>
      <Lbl x={624} y={302} w={23}>INT = A</Lbl><Lbl x={624} y={310} w={23}>INT = B</Lbl><Lbl x={624} y={318} w={23}>INT = C</Lbl>
      <Lbl x={624} y={355} w={24}>READ A</Lbl><Lbl x={624} y={391} w={24}>READ B</Lbl><Lbl x={624} y={427} w={24}>READ C</Lbl>
      <Lbl x={605.700} y={475} w={58.500}>if A &gt; B and A &gt; C</Lbl>
      <Lbl x={727} y={475} w={63}>elif B &gt; A and B &gt; C</Lbl>
      <Lbl x={873.700} y={475} w={14.500}>else</Lbl>
      <Lbl x={626} y={528} w={18.500}>PRINT</Lbl><Lbl x={597} y={536} w={75.300}>"A Bilangan Terbesar"</Lbl>
      <Lbl x={749} y={528} w={18.500}>PRINT</Lbl><Lbl x={721} y={536} w={75.300}>"B Bilangan Terbesar"</Lbl>
      <Lbl x={872} y={528} w={18.500}>PRINT</Lbl><Lbl x={843.700} y={536} w={75.300}>"C Bilangan Terbesar"</Lbl>
      <Lbl x={749} y={582} w={18.500}>PRINT</Lbl><Lbl x={731.700} y={590} w={53.500}>"Nilai Terbesar"</Lbl>
      <Lbl x={749.700} y={646} w={18.500}>STOP</Lbl>
    </svg>
  );
}

function Canvas() {
  return (
    <div className="flex w-[899px] shrink-0 flex-col bg-[#f8f9fc]">
      <div className="flex h-[470px]">
        <div className="ml-[276px] w-px bg-[#dcdfe3]" />
        <div className="ml-px"><Flowchart /></div>
        <div className="ml-px w-px bg-[#dcdfe3]" />
        <div className="ml-auto mr-[2px] mt-[156px] h-[136px] w-2 rounded-full bg-[#dfe0e2]" />
      </div>
      <div className="h-[13px] pt-[3px]"><div className="ml-[233px] h-2 w-[345px] rounded-full bg-[#dfe0e2]" /></div>
      <div className="flex h-[39px] border-t border-[#e2e4e6] bg-[#f1f3f4]">
        <div className="flex w-[29px] items-center justify-center border-r border-[#e2e4e6]">
          <svg width="3" height="13" fill="#8c8c8c"><path d="M0 0h3v3H0zM0 5h3v3H0zM0 10h3v3H0z" /></svg>
        </div>
        <div className="flex w-[137px] items-center justify-center bg-white pt-[5px] text-[13px] font-bold tracking-[-0.3px] text-[#dd6b0e]">Page-1</div>
        <div className="flex w-[30px] justify-center border-x border-[#e2e4e6] pt-[11px]"><svg width="13" height="13" stroke="#8f8f8f" strokeWidth="2.500"><path d="M6.500 0v13M0 6.500h13" /></svg></div>
      </div>
    </div>
  );
}

/* ---------- style presets ---------- */

type Preset = { bg: string; fill: string; box: string; line: string; text: string; plate?: boolean };
const presets: Preset[] = [
  { bg: "bg-[#fbfbfb]", fill: "#ffffff", box: "#000000", line: "#000000", text: "#000000", plate: true },
  { bg: "bg-[#fbfbfb]", fill: "#21c0a5", box: "#006658", line: "#006658", text: "#5c5c5c", plate: true },
  { bg: "bg-[#fbfbfb]", fill: "#f694c1", box: "#af45ed", line: "#60e696", text: "#095c86", plate: true },
  { bg: "bg-[#fbfbfb]", fill: "#b2c9ab", box: "#788aa3", line: "#788aa3", text: "#46495d", plate: true },
  { bg: "bg-[#fbfbfb]", fill: "#ffe45e", box: "#ff6392", line: "#ff6392", text: "#5aa9e6", plate: true },
  { bg: "bg-[#f1faee]", fill: "#a8dadc", box: "#457b9d", line: "#457b9d", text: "#1d3557" },
  { bg: "bg-[#f4f1de]", fill: "#f2cc8f", box: "#e07a5f", line: "#e07a5f", text: "#393c56" },
  { bg: "bg-[#dad2d8]", fill: "#fae5c7", box: "#0f8b8d", line: "#a8201a", text: "#143642" },
  { bg: "bg-[#283618]", fill: "#bc6c25", box: "#dda15e", line: "#dda15e", text: "#fefae0" },
  { bg: "bg-[#114b5f]", fill: "#f45b69", box: "#028090", line: "#028090", text: "#e4fde1" },
];

const PresetCard = ({ p }: { p: Preset }) => (
  <div className={`h-[92px] w-[98px] rounded-[7px] border border-[#808080] ${p.bg}`}>
    <svg width="96" height="90" viewBox="1 1 96 90" fontFamily="Liberation Sans, sans-serif" textAnchor="middle">
      <rect x="15" y="9" width="70" height="40" fill={p.fill} stroke={p.box} strokeWidth="2" />
      <path d="M33 50V71H67V57" fill="none" stroke={p.line} strokeWidth="2" />
      <path d="M67 50L72.700 61L67 58.500L61.300 61Z" fill={p.line} />
      {p.plate && <rect x="25" y="73" width="52" height="14" fill="#fff" />}
      <text x="50" y="34" fontSize="12" textLength="35.500" fill={p.text}>Shape</text>
      <text x="49.500" y="84" fontSize="11" textLength="49.500" fill={p.text}>Connector</text>
    </svg>
  </div>
);

function FormatPanel() {
  return (
    <div className="flex grow bg-[#fbfbfb]">
      <div className="w-[230px] shrink-0 border-l border-l-[#dadce0]">
        <div className="grid grid-cols-[98px_98px] gap-x-1 gap-y-[7px] pl-4 pt-px">
          {presets.map((p, i) => <PresetCard key={i} p={p} />)}
        </div>
        <div className="flex items-center pl-[22px] pt-[11px]">
          <svg width="8" height="12" fill="none" stroke="#777" strokeWidth="2"><path d="M7 1L2 6l5 5" /></svg>
          <div className="ml-[78px] size-2 rounded-[3px] border border-[#aab4b9] bg-[#84d7ff]" />
          <div className="ml-[7px] size-2 rounded-[3px] border border-[#aaa] bg-white" />
          <svg width="8" height="12" className="ml-[75px]" fill="none" stroke="#777" strokeWidth="2"><path d="M1 1l5 5-5 5" /></svg>
        </div>
      </div>
      <div className="mt-[95px] h-[424px] w-2 rounded-full bg-[#dedede]" />
    </div>
  );
}

/* ---------- taskbar ---------- */

const Paint = () => (
  <svg width="24" height="24" viewBox="0 0 24 24">
    <path d="M11 3C4 3.500 0 9 .500 15c.5 5 5 6 8 5 2-.8 2 1.500 5 1 6-1 9-6 8.500-11C21.500 5 17 2.500 11 3z" fill="#b8d8ec" stroke="#7fa9c6" />
    <circle cx="5" cy="13" r="2" fill="#d8333c" /><circle cx="8.500" cy="8.500" r="2" fill="#3fa535" /><circle cx="14" cy="7.500" r="2.200" fill="#f2b420" /><circle cx="9" cy="15" r="1.800" fill="#eef6fb" stroke="#8ab" strokeWidth=".5" />
    <path d="M22 2.500L14 21l-1.500 2 .3-3L20 2z" fill="#e68a35" stroke="#a86a3b" strokeWidth=".6" /><path d="M18.500 0l5 2.500-2.500 4-4-2z" fill="#b58b63" />
  </svg>
);
const Folder = () => (
  <svg width="22" height="19" viewBox="0 0 22 19"><path d="M0 1a1 1 0 0 1 1-1h7l2 2v3H0z" fill="#dc9a0c" /><path d="M0 3.500h9l1.500-2H21a1 1 0 0 1 1 1V18H0z" fill="#ffcf50" /><path d="M4 18.500v-7a1 1 0 0 1 1-1h12a1 1 0 0 1 1 1v7h-4v-4H8v4z" fill="#3a97da" /></svg>
);
const Chrome = () => (
  <svg width="26" height="26" viewBox="0 0 26 26">
    <circle cx="12" cy="12" r="11.500" fill="#fbbc05" /><path d="M12 .5A11.500 11.500 0 0 0 2 6.300l5 8.500L12 6.500h10A11.500 11.500 0 0 0 12 .5z" fill="#d8392c" />
    <path d="M2 6.300A11.500 11.500 0 0 0 12 23.500l5-8.500-10-.5z" fill="#12994f" /><circle cx="12" cy="12" r="5.500" fill="#fff" /><circle cx="12" cy="12" r="4.300" fill="#4285f4" />
    <circle cx="18" cy="18" r="8" fill="#f3f3f3" /><g transform="translate(12 11.500) scale(.62)"><path d="M3 20c.5-3.500 3-4 7-4s6.500.5 7 4z" fill="#a9b4bd" /><ellipse cx="10" cy="9" rx="5.500" ry="7.500" fill="#c99a80" /><path d="M3.500 10C2 2 6 0 10 0s8 2 6.500 10L14.500 6h-9z" fill="#221d1c" /></g>
  </svg>
);
const Nitro = () => (
  <svg width="24" height="24" viewBox="0 0 24 24"><rect width="24" height="24" fill="#f2491c" /><path d="M11.500 2.500c3-.8 5-.8 7.500-.5.500 6-1 12-5 16.500-.5-5-1-9-2.500-16zM4.500 7c1.500-2 3.500-3.500 5.500-4.500-1 4-.5 7 1 10s2 6 1.500 8.500c-2.500 1-4.500 1-6.500.5C4 17 3.500 12 4.500 7z" fill="#fff" /></svg>
);
const Pycharm = () => (
  <svg width="22" height="22" viewBox="0 0 22 22"><rect width="22" height="22" rx="1" fill="#d9e52a" /><path d="M0 0h12L3 12l-3 8z" fill="#21d789" /><path d="M12 22h8a2 2 0 0 0 2-2v-8z" fill="#a6e619" /><rect x="3" y="3" width="16" height="16" fill="#0a0a0a" /><path d="M5 16.500h5" stroke="#fff" strokeWidth="1.200" /><text x="4.600" y="11.500" fontSize="8.500" textLength="11.500" fontWeight="700" fill="#fff" fontFamily="Open Sans, sans-serif">PC</text></svg>
);
const Photos = () => (
  <svg width="22" height="22" viewBox="0 0 22 22"><rect width="22" height="22" rx="1" fill="#21a7ea" /><path d="M22 8l-7 7 7 7z" fill="#7a72d8" /><path d="M0 14L7 7.500 20 22H0z" fill="#143e7c" /><path d="M10 22l6.500-9L22 18v4z" fill="#1b57a8" /><circle cx="15" cy="5" r="2" fill="#fff" /></svg>
);

const TaskBtn = ({ w, m, on = false, bar, children }: Kids & { w: string; m: string; on?: boolean; bar?: React.ReactNode }) => (
  <div className={`flex h-10 shrink-0 flex-col ${w} ${m} ${on ? "bg-[#eeeeee]" : ""}`}>
    <div className="flex grow items-center justify-center pt-[2px]">{children}</div>
    {bar ?? <div className="h-[2px] bg-[#0078d7]" />}
  </div>
);

function Taskbar() {
  return (
    <div className="flex h-10 items-center bg-[#d5d5d5] [&>svg]:shrink-0">
      <svg width="16" height="16" className="ml-4"><path d="M0 2.300L6.800 1.300V7.500H0zM7.800 1.200L16 0V7.500H7.800zM0 8.500H6.800V14.700L0 13.700zM7.800 8.500H16V16L7.800 14.800z" /></svg>
      <div className="ml-[16px] flex h-10 w-[344px] shrink-0 items-center border border-[#c0c0c0] bg-white pl-[11px]">
        <svg width="17" height="17" fill="none" stroke="#222" strokeWidth="1.400"><circle cx="10.500" cy="6" r="5" /><path d="M7 10L.8 16.200" /></svg>
        <span className="ml-[11px] text-[15px] tracking-[-0.47px] text-[#333]">Ketik di sini untuk mencari</span>
      </div>
      <svg width="16" height="16" className="ml-[16px]" fill="none" stroke="#111" strokeWidth="2.200"><circle cx="8" cy="8" r="6.600" /></svg>
      <svg width="17" height="16" className="ml-[32px]" fill="none" stroke="#111" strokeWidth="1.200"><path d="M.6 0v3.400H11.400V0M.6 5.500h10.800v5.500H.6zM.6 16v-3h10.800v3M14.500 0v3M14.500 8.500V16" /><path d="M13 4h3v3.200h-3z" fill="#111" stroke="none" /></svg>
      <TaskBtn w="w-[40px]" m="ml-[22px]"><Paint /></TaskBtn>
      <TaskBtn w="w-[40px]" m="ml-[9px]"><Folder /></TaskBtn>
      <TaskBtn w="w-[48px]" m="ml-[5px]" on><Chrome /></TaskBtn>
      <TaskBtn w="w-[40px]" m="ml-[5px]"><Nitro /></TaskBtn>
      <TaskBtn w="w-[40px]" m="ml-[9px]"><Pycharm /></TaskBtn>
      <TaskBtn w="w-[40px]" m="ml-[9px]" bar={<div className="flex h-[2px]"><div className="w-8 bg-[#0078d7]" /><div className="w-2 bg-[#5ea5de]" /></div>}><Photos /></TaskBtn>
      <svg width="21" height="17" viewBox="0 0 21 17" className="ml-[208px]"><path d="M5 11a4 4 0 0 1-.5-6.500C6 1 9-.5 12 .5c2 .7 3.500 2 4 4 3 0 5 1.500 4.500 4C20 10.500 18 11 17 11z" fill="#9fd0f5" /><path d="M4 11.500C1.500 11.500 0 10 0 8.300 0 6 2.500 5 4.500 5.500 6 3 10 3.500 11 6c2-.5 4 1 3.500 3.500-.3 1.300-1.500 2-3 2z" fill="#eaf5fd" /><path d="M10.500 8.500c1.700 2.500 2.200 3.800 2.200 5a2.200 2.200 0 0 1-4.400 0c0-1.200.5-2.500 2.200-5z" fill="#2e8de0" /></svg>
      <div className="ml-[10px] flex w-[134px] shrink-0 whitespace-nowrap text-[14px] text-[#1b1b1b]">
        <span className="w-[38px] tracking-[-0.5px]">26°C</span><span className="tracking-[-0.42px]">Hujan ringan</span>
      </div>
      <svg width="12" height="7" fill="none" stroke="#222" strokeWidth="1.300"><path d="M.8 6L6 1l5.200 5" /></svg>
      <svg width="17" height="16" className="ml-[10px]" fill="none" stroke="#222" strokeWidth="1.200"><path d="M1 2.500L15.500.8V10M1 2.500v11l8 .8M5 14v1.500M11 4.500v2H8.500M5.500 11V9h2.500M5.500 6.500c1-2.500 4-2.500 5.500-.5M11 8.500c-1 2.500-4 2.500-5.500.8" /><circle cx="13" cy="12.500" r="3.500" fill="#ff9500" stroke="none" /></svg>
      <svg width="14" height="13" className="ml-[9px]" fill="none" stroke="#333" strokeWidth="1.200"><path d="M.8 12C1 5 6 1 13 1M3.800 12.300C4 7.500 7.500 4.500 13 4.200M7 12.300c.2-3 2.500-5 6-5" /><circle cx="11.500" cy="11" r="1.400" fill="#222" stroke="none" /></svg>
      <svg width="17" height="14" className="ml-[8px]" fill="none" stroke="#222" strokeWidth="1.200"><path d="M.6 4.800h2.600L6.500 1.500v11L3.200 9.200H.6zM9 4.800c1 1.200 1 3.200 0 4.400M11.300 3c2 2.300 2 5.700 0 8" /><path d="M13.600 1c3 3.300 3 8.700 0 12" stroke="#999" /></svg>
      <div className="ml-[6px] flex w-[64px] shrink-0 flex-col items-center whitespace-nowrap text-[12px] leading-[18px] text-[#1b1b1b]">
        <span className="tracking-[-0.6px]">3:14</span><span className="tracking-[-0.6px]">16/11/2021</span>
      </div>
      <svg width="17" height="17" className="ml-[15px]" fill="none" stroke="#222" strokeWidth="1.300"><path d="M.8 1h15.400v12H11l-2.500 2.500L6 13H.8z" /></svg>
      <div className="ml-auto mr-1 h-10 w-px bg-[#a9a9a9]" />
    </div>
  );
}

export default function App() {
  return (
    <div className="h-[768px] w-[1366px] overflow-hidden bg-white font-['Open_Sans',sans-serif] text-black">
      <TabStrip />
      <AddressBar />
      <Bookmarks />
      <Header />
      <Toolbar />
      <div className="flex h-[522px]">
        <Sidebar />
        <div className="flex w-[13px] shrink-0 items-start justify-center border-r border-[#dadce0] bg-[#fbfbfb] pt-[258px]">
          <svg width="4" height="6" stroke="#777"><path d="M.5 0v6M3.500 0v6" /></svg>
        </div>
        <Canvas />
        <FormatPanel />
      </div>
      <Taskbar />
    </div>
  );
}
